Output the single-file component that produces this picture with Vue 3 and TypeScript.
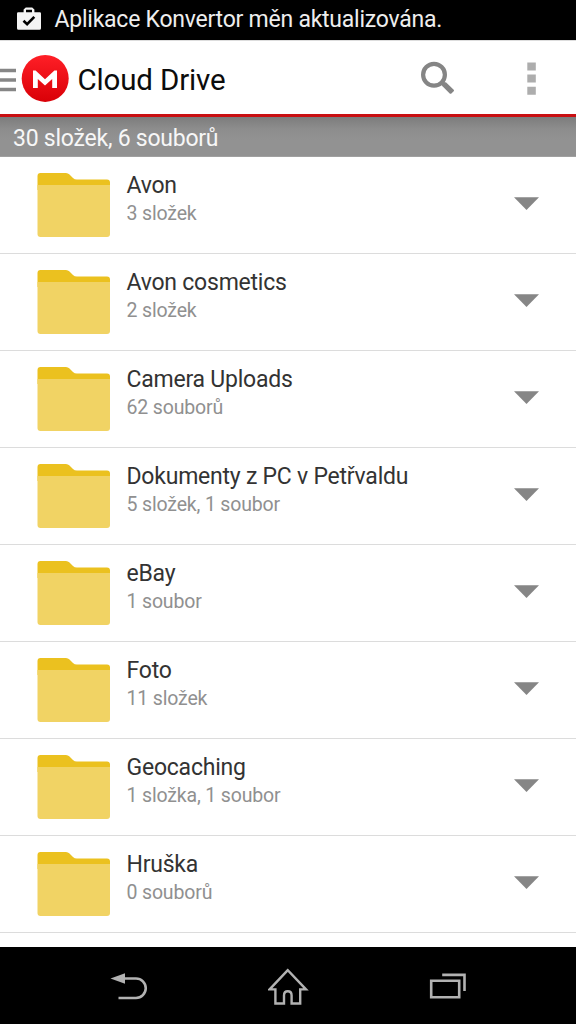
<script setup lang="ts">
interface Folder {
  name: string
  info: string
}

const folders: Folder[] = [
  { name: 'Avon', info: '3 složek' },
  { name: 'Avon cosmetics', info: '2 složek' },
  { name: 'Camera Uploads', info: '62 souborů' },
  { name: 'Dokumenty z PC v Petřvaldu', info: '5 složek, 1 soubor' },
  { name: 'eBay', info: '1 soubor' },
  { name: 'Foto', info: '11 složek' },
  { name: 'Geocaching', info: '1 složka, 1 soubor' },
  { name: 'Hruška', info: '0 souborů' },
]
</script>

<template>
  <div class="screen">
    <div class="status">
      <svg class="bag" width="26" height="26" viewBox="0 0 26 26">
        <path d="M2.200 6.300H7.600V3.500L9.800 1.400h6.400l2.200 2.100v2.800h5.400q1.200 0 1.200 1.200v14.800q0 1.500-1.500 1.500H2.500Q1 23.800 1 22.300V7.500q0-1.200 1.200-1.200zM10 6.300h6V3.800h-6z" fill="#f4f4f4" fill-rule="evenodd" />
        <path d="M7.500 14.800l3.600 3.400 7.200-7.400" fill="none" stroke="#000" stroke-width="2.600" />
      </svg>
      <span class="notice">Aplikace Konvertor měn aktualizována.</span>
    </div>

    <header class="bar">
      <svg class="menu" width="16" height="30" viewBox="0 0 16 30">
        <path d="M0 7.500h16M0 17h16M0 26.500h16" stroke="#868686" stroke-width="3.700" />
      </svg>
      <svg class="logo" width="48" height="48" viewBox="0 0 48 48">
        <defs>
          <linearGradient id="red" x1="0" y1="0" x2="0" y2="1">
            <stop offset="0" stop-color="#ff1f27" />
            <stop offset="1" stop-color="#d90007" />
          </linearGradient>
        </defs>
        <circle cx="24.200" cy="24.400" r="23.500" fill="url(#red)" />
        <path d="M12 34V16.500h2.600L24 25.300l9.400-8.800H36V34h-4.800V25L24 31.500l-7.200-6.500v9z" fill="#fff" />
      </svg>
      <h1 class="title">Cloud Drive</h1>
      <svg class="search" width="36" height="36" viewBox="0 0 36 36">
        <circle cx="14" cy="14.700" r="10.900" fill="none" stroke="#858585" stroke-width="4.200" />
        <path d="M21.500 22l3 3" stroke="#858585" stroke-width="4" />
        <path d="M22.500 26.200q-.6-1 .1-1.700l2-2q.8-.6 1.600 0l7.500 7.200q.7.800 0 1.600l-2.300 2.200q-.9.700-1.700 0z" fill="#858585" />
      </svg>
      <svg class="more" width="9" height="34" viewBox="0 0 9 34">
        <path d="M.3 1.600h8.500v8H.3zM.3 13.600h8.500v8H.3zM.3 25.700h8.500v8H.3z" fill="#adadad" />
      </svg>
    </header>

    <div class="summary"><span>30 složek, 6 souborů</span></div>

    <ul class="list">
      <li v-for="folder in folders" :key="folder.name" class="row">
        <svg class="folder" width="74" height="66" viewBox="0 0 74 66">
          <path d="M.5 18V4Q.5 1 3.500 1H29q2 0 3.500 1.500l3.500 3.500Q37.500 7.500 40 7.500H70q3 0 3 3V18z" fill="#ebc11f" />
          <path d="M.5 13H73v49q0 3-3 3H3.500q-3 0-3-3z" fill="#f1d364" />
        </svg>
        <div class="labels">
          <div class="name"><span>{{ folder.name }}</span></div>
          <div class="info"><span>{{ folder.info }}</span></div>
        </div>
        <svg class="arrow" width="26" height="14" viewBox="0 0 26 14">
          <path d="M0 .300h25L12.500 13z" fill="#868686" />
        </svg>
      </li>
    </ul>

    <nav class="nav">
      <svg width="38" height="40" viewBox="0 0 38 40">
        <path d="M14 12.500h12a9.750 9.750 0 0 1 0 19.500H8.500" fill="none" stroke="#b2b2b2" stroke-width="2.600" />
        <path d="M.5 12.500L15 7.300v10.400z" fill="#b2b2b2" />
      </svg>
      <svg width="42" height="40" viewBox="0 0 42 40">
        <path d="M19.800 4.200L1.600 23.400H7.400V37.500H16V29.500q0-4.200 3.800-4.200t3.800 4.200v8h8.600V23.400H38z" fill="none" stroke="#b2b2b2" stroke-width="2.400" />
      </svg>
      <svg width="38" height="40" viewBox="0 0 38 40">
        <path d="M2.200 14.700h28v16.600h-28zM13.200 8.900h22.300v16" fill="none" stroke="#b2b2b2" stroke-width="2.600" />
      </svg>
    </nav>
  </div>
</template>

<style>
body {
  margin: 0;
}
</style>

<style scoped>
.screen {
  width: 576px;
  height: 1024px;
  display: flex;
  flex-direction: column;
  overflow: hidden;
  background: #fff;
  font-family: Roboto, "Liberation Sans", sans-serif;
  white-space: nowrap;
}
.status {
  height: 40px;
  flex: none;
  display: flex;
  align-items: center;
  box-sizing: border-box;
  padding-left: 16px;
  background: #000;
}
.bag {
  margin-bottom: 2px;
}
.notice {
  margin-left: 12.500px;
  color: #eee;
  font-size: 23px;
  letter-spacing: -0.240px;
  line-height: 40px;
  height: 40px;
}
.bar {
  height: 77px;
  flex: none;
  box-sizing: border-box;
  display: flex;
  align-items: center;
  border-top: 1px solid #ddd;
  border-bottom: 3px solid #c90f12;
}
.logo {
  margin-left: 5px;
}
.title {
  margin: 0 0 0 8.500px;
  width: 342px;
  font-size: 29.500px;
  letter-spacing: -0.150px;
  line-height: 74px;
  padding-top: 5px;
  font-weight: 400;
  color: #0c0c0c;
}
.search {
  flex: none;
}
.more {
  margin-left: 71px;
}
.summary {
  height: 40px;
  flex: none;
  box-sizing: border-box;
  padding-left: 13px;
  border-bottom: 1px solid #a0a0a0;
  background: linear-gradient(#7c7c7c, #8d8d8d 30%, #929292 60%);
  color: #f7f7f7;
  font-size: 23px;
  letter-spacing: -0.240px;
  line-height: 43px;
}
.list {
  margin: 0;
  padding: 0;
  flex: 1;
  list-style: none;
}
.row {
  height: 97px;
  box-sizing: border-box;
  border-bottom: 1px solid #dcdcdc;
  display: flex;
  align-items: flex-start;
}
.folder {
  flex: none;
  margin: 15px 0 0 37px;
}
.labels {
  width: 388px;
  flex: none;
  margin: 14px 0 0 15.500px;
}
.name {
  height: 28px;
  line-height: 29px;
  font-size: 23px;
  letter-spacing: -0.230px;
  color: #333;
}
.info {
  height: 28px;
  line-height: 29px;
  font-size: 19.500px;
  letter-spacing: -0.160px;
  color: #909090;
}
.arrow {
  margin-top: 40px;
  margin-left: -1px;
}
.nav {
  height: 77px;
  flex: none;
  display: flex;
  align-items: center;
  justify-content: space-between;
  box-sizing: border-box;
  padding: 0 109px 0 110px;
  background: #000;
}
</style>
